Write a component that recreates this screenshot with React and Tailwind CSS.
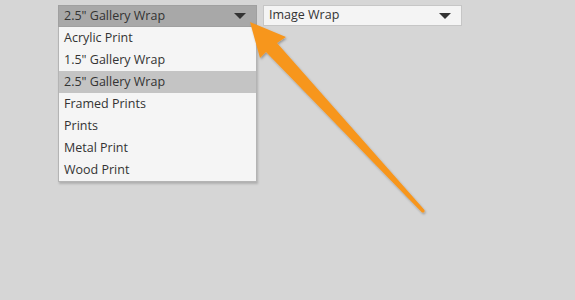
import React from 'react';

const options = [
    'Acrylic Print',
    '1.5" Gallery Wrap',
    '2.5" Gallery Wrap',
    'Framed Prints',
    'Prints',
    'Metal Print',
    'Wood Print',
];

function Caret() {
    return (
        <svg width="12" height="6" viewBox="0 0 12 6" className="shrink-0">
            <path d="M0 0 H12 L6 6 Z" fill="#333333" />
        </svg>
    );
}

export default function App() {
    const selected = '2.5" Gallery Wrap';

    return (
        <div className="relative w-[575px] h-[300px] bg-[#d6d6d6] overflow-hidden font-['Open_Sans',sans-serif] text-[12.5px] text-[#333333]">
            <div className="flex items-start gap-[6px] pl-[58px] pt-[5px]">
                <div className="w-[199px]">
                    <div className="h-[22px] flex items-center justify-between pl-[5px] pr-[10px] bg-[#a8a8a8] border border-[#a0a0a0]">
                        <span>{selected}</span>
                        <Caret />
                    </div>
                    <ul className="bg-[#f5f5f5] border border-t-0 border-[#b4b4b4] shadow-[1px_2px_2px_rgba(0,0,0,0.18)]">
                        {options.map((opt) => (
                            <li
                                key={opt}
                                className={`h-[22px] flex items-center pl-[5px] ${opt === selected ? 'bg-[#c4c4c4]' : ''}`}
                            >
                                {opt}
                            </li>
                        ))}
                    </ul>
                </div>
                <div className="w-[199px] h-[21px] flex items-center justify-between pl-[5px] pr-[10px] bg-[#f4f4f4] border border-[#c6c6c6]">
                    <span>Image Wrap</span>
                    <Caret />
                </div>
            </div>

            {/* callout arrow */}
            <svg className="absolute left-0 top-0" width="575" height="300" viewBox="0 0 575 300">
                <defs>
                    <filter id="sh" x="-20%" y="-20%" width="140%" height="140%">
                        <feDropShadow dx="1" dy="1.5" stdDeviation="1.2" floodColor="#000" floodOpacity="0.3" />
                    </filter>
                </defs>
                <path
                    d="M250 22 L286 37 L277 43 L424.5 210 Q425 213 422 212.5 L266 52 L260 58 Z"
                    fill="#f7961f"
                    filter="url(#sh)"
                />
            </svg>
        </div>
    );
}
